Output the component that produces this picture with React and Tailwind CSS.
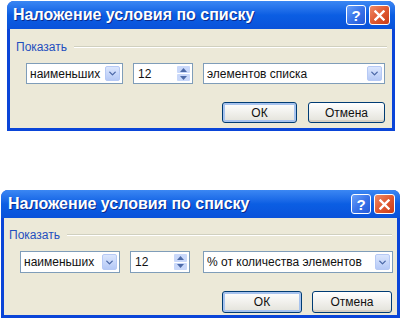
import { ChevronDown } from 'lucide-react'

const ComboArrow = () => (
  <div className="flex h-full w-[15px] items-center justify-center rounded-[2px] border border-[#b6c9f5] bg-gradient-to-b from-[#dbe6fd] to-[#b5c9f6]">
    <ChevronDown size={11} strokeWidth={3} className="text-[#4d6aa8]" />
  </div>
)

const SpinArrows = () => (
  <div className="flex h-full w-[13px] flex-col gap-[1px] py-[1px]">
    <div className="flex flex-1 items-center justify-center rounded-[1px] bg-[#c9d8fa]">
      <svg width="7" height="4" viewBox="0 0 7 4"><path d="M0 4 L3.5 0 L7 4 Z" fill="#4d6aa8" /></svg>
    </div>
    <div className="flex flex-1 items-center justify-center rounded-[1px] bg-[#c9d8fa]">
      <svg width="7" height="4" viewBox="0 0 7 4"><path d="M0 0 L3.5 4 L7 0 Z" fill="#4d6aa8" /></svg>
    </div>
  </div>
)

const Combo = ({ text, className }) => (
  <div className={`flex items-center border border-[#7f9db9] bg-white pl-[3px] pr-[2px] py-[2px] ${className}`}>
    <span className="flex-1 truncate text-[12px] text-[#111]">{text}</span>
    <ComboArrow />
  </div>
)

const Spinner = ({ className }) => (
  <div className={`flex items-center border border-[#7f9db9] bg-white pl-[4px] pr-[2px] py-[1px] ${className}`}>
    <span className="flex-1 text-[12px] text-[#111]">12</span>
    <SpinArrows />
  </div>
)

const XpButton = ({ label, isDefault, className }) => (
  <button
    className={`flex items-center justify-center rounded-[3px] border border-[#003c74] bg-gradient-to-b from-white to-[#e3e2da] text-[12px] text-[#111] ${isDefault ? 'shadow-[inset_0_0_0_2px_#a7c3ee]' : 'shadow-[inset_0_-2px_0_#d6d0c5]'} ${className}`}
  >
    {label}
  </button>
)

const Dialog = ({ cfg, thirdText }) => (
  <div className={`flex flex-col overflow-hidden rounded-t-[7px] bg-[#0a45d8] ${cfg.box}`}>
    <div className={`flex h-[28px] items-center bg-gradient-to-b from-[#3b87f3] via-[#0b5ee3] to-[#0a52da] ${cfg.titlePad}`}>
      <span className="flex-1 font-['Liberation_Sans',sans-serif] text-[16px] font-bold text-white [text-shadow:1px_1px_#0b2a8c]">
        Наложение условия по списку
      </span>
      <div className="flex h-[20px] w-[20px] items-center justify-center rounded-[3px] border border-white bg-gradient-to-br from-[#6aa0f8] via-[#3a74ea] to-[#2458d8] font-['Liberation_Sans',sans-serif] text-[15px] font-bold leading-none text-white">
        ?
      </div>
      <div className="ml-[3px] flex h-[20px] w-[21px] items-center justify-center rounded-[3px] border border-white bg-gradient-to-br from-[#ee8a66] via-[#e05a32] to-[#c93a14]">
        <svg width="11" height="11" viewBox="0 0 11 11">
          <path d="M1.5 1.5 L9.5 9.5 M9.5 1.5 L1.5 9.5" stroke="white" strokeWidth="2.4" strokeLinecap="square" />
        </svg>
      </div>
    </div>
    <div className="mx-[3px] mb-[3px] flex flex-1 flex-col bg-[#ece9d8] font-['Liberation_Sans',sans-serif]">
      <div className={`flex items-center ${cfg.groupPad}`}>
        <span className="text-[12px] text-[#1f4fbf]">Показать</span>
        <div className="ml-[7px] flex-1 border-t border-b border-t-[#d0d0bf] border-b-white" />
      </div>
      <div className={`flex items-center ${cfg.row}`}>
        <Combo text="наименьших" className={cfg.c1} />
        <Spinner className={cfg.spin} />
        <Combo text={thirdText} className={cfg.c3} />
      </div>
      <div className={`flex justify-end ${cfg.btnRow}`}>
        <XpButton label="ОК" isDefault className={cfg.ok} />
        <XpButton label="Отмена" className={cfg.cancel} />
      </div>
    </div>
  </div>
)

const top = {
  box: 'ml-[7px] mt-[1px] w-[388px] h-[130px]',
  titlePad: 'pl-[6px] pr-[5px]',
  groupPad: 'pl-[6px] pr-[5px] pt-[9px]',
  row: 'mt-[7px] pl-[16px] gap-[10px] h-[21px]',
  c1: 'w-[97px] h-[21px]',
  spin: 'w-[60px] h-[21px]',
  c3: 'w-[182px] h-[21px]',
  btnRow: 'mt-[18px] pr-[7px] gap-[11px]',
  ok: 'w-[75px] h-[21px]',
  cancel: 'w-[77px] h-[21px]',
}

const bottom = {
  box: 'ml-[1px] mt-[59px] w-[399px] h-[128px]',
  titlePad: 'pl-[7px] pr-[5px]',
  groupPad: 'pl-[5px] pr-[5px] pt-[8px]',
  row: 'mt-[7px] pl-[16px] gap-[10px] h-[22px]',
  c1: 'w-[100px] h-[22px]',
  spin: 'w-[60px] h-[22px]',
  c3: 'w-[190px] h-[22px] ml-[3px]',
  btnRow: 'mt-[18px] pr-[5px] gap-[10px]',
  ok: 'w-[80px] h-[22px]',
  cancel: 'w-[80px] h-[22px]',
}

export default function App() {
  return (
    <div className="flex h-[324px] w-[402px] flex-col bg-white">
      <Dialog cfg={top} thirdText="элементов списка" />
      <Dialog cfg={bottom} thirdText="% от количества элементов" />
    </div>
  )
}
